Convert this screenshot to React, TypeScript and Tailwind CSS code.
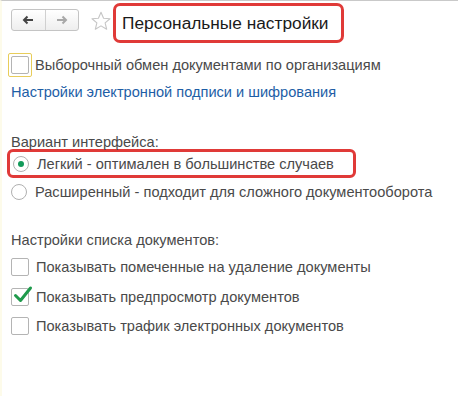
import React from 'react';

const font = { fontFamily: '"Liberation Sans", Arial, sans-serif' };

function Checkbox({ checked, focused }: { checked?: boolean; focused?: boolean }) {
  const box = (
    <div className="relative w-[18px] h-[18px] rounded-[2px] border border-[#b4b4b4] bg-white">
      {checked && (
        <svg className="absolute left-[1px] -top-[4px]" width="20" height="20" viewBox="0 0 20 20">
          <path d="M2.5 10.5 L7.5 15.5 L17.5 3" fill="none" stroke="#1f9a4c" strokeWidth="3" strokeLinecap="round" strokeLinejoin="round" />
        </svg>
      )}
    </div>
  );
  if (focused) {
    return <div className="p-[2px] border border-[#e8cd5a] rounded-[2px]">{box}</div>;
  }
  return box;
}

function Radio({ checked }: { checked?: boolean }) {
  return (
    <div className="w-[16px] h-[16px] rounded-full border border-[#b0b0b0] bg-white flex items-center justify-center">
      {checked && <div className="w-[6px] h-[6px] rounded-full bg-[#129a5a]" />}
    </div>
  );
}

export default function App() {
  return (
    <div className="w-[458px] h-[396px] bg-white border-t border-[#c9c9c9] border-l-[2px] border-l-[#fdfbea] overflow-hidden text-[14.6px] leading-[20px] text-[#4a4a4a]" style={font}>
      {/* header */}
      <div className="flex items-start h-[52px]">
        <div className="mt-[8px] ml-[9px] flex w-[68px] h-[22px] rounded-[3px] border border-[#c4c4c4] bg-gradient-to-b from-white to-[#eeeeee]">
          <div className="flex-1 flex items-center justify-center border-r border-[#d0d0d0]">
            <svg width="12" height="10" viewBox="0 0 12 10">
              <path d="M11 5 H3 M5.5 1.5 L2 5 L5.5 8.5" fill="none" stroke="#444" strokeWidth="2" />
            </svg>
          </div>
          <div className="flex-1 flex items-center justify-center">
            <svg width="12" height="10" viewBox="0 0 12 10">
              <path d="M1 5 H9 M6.5 1.5 L10 5 L6.5 8.5" fill="none" stroke="#a8a8a8" strokeWidth="2" />
            </svg>
          </div>
        </div>
        <svg className="mt-[9px] ml-[11px]" width="22" height="22" viewBox="0 0 24 24">
          <path d="M12 2.5 L14.8 9 L21.8 9.5 L16.5 14 L18.2 21 L12 17.3 L5.8 21 L7.5 14 L2.2 9.5 L9.2 9 Z" fill="none" stroke="#c6c6c6" strokeWidth="1.2" strokeLinejoin="round" />
        </svg>
        <div className="mt-[2px] ml-[1px] w-[231px] h-[40px] rounded-[7px] border-[3px] border-[#e03a38] flex items-center pl-[6px] text-[17.3px] text-[#1a1a1a]">
          Персональные настройки
        </div>
      </div>

      {/* selective exchange */}
      <div className="flex items-center gap-[3px] ml-[6px]">
        <Checkbox focused />
        <span>Выборочный обмен документами по организациям</span>
      </div>
      <div className="ml-[9px] mt-[5px] text-[#1d5ea6]">Настройки электронной подписи и шифрования</div>

      {/* interface variant */}
      <div className="ml-[9px] mt-[30px]">Вариант интерфейса:</div>
      <div className="ml-[5px] -mt-[3px] w-[349px] h-[29px] rounded-[6px] border-[3px] border-[#e03a38] flex items-center gap-[8px] pl-[3px]">
        <Radio checked />
        <span>Легкий - оптимален в большинстве случаев</span>
      </div>
      <div className="ml-[9px] mt-[4px] flex items-center gap-[8px]">
        <Radio />
        <span>Расширенный - подходит для сложного документооборота</span>
      </div>

      {/* list settings */}
      <div className="ml-[9px] mt-[28px]">Настройки списка документов:</div>
      <div className="ml-[9px] mt-[7px] flex flex-col gap-[9.5px]">
        <div className="flex items-center gap-[7px]">
          <Checkbox />
          <span>Показывать помеченные на удаление документы</span>
        </div>
        <div className="flex items-center gap-[7px]">
          <Checkbox checked />
          <span>Показывать предпросмотр документов</span>
        </div>
        <div className="flex items-center gap-[7px]">
          <Checkbox />
          <span>Показывать трафик электронных документов</span>
        </div>
      </div>
    </div>
  );
}
